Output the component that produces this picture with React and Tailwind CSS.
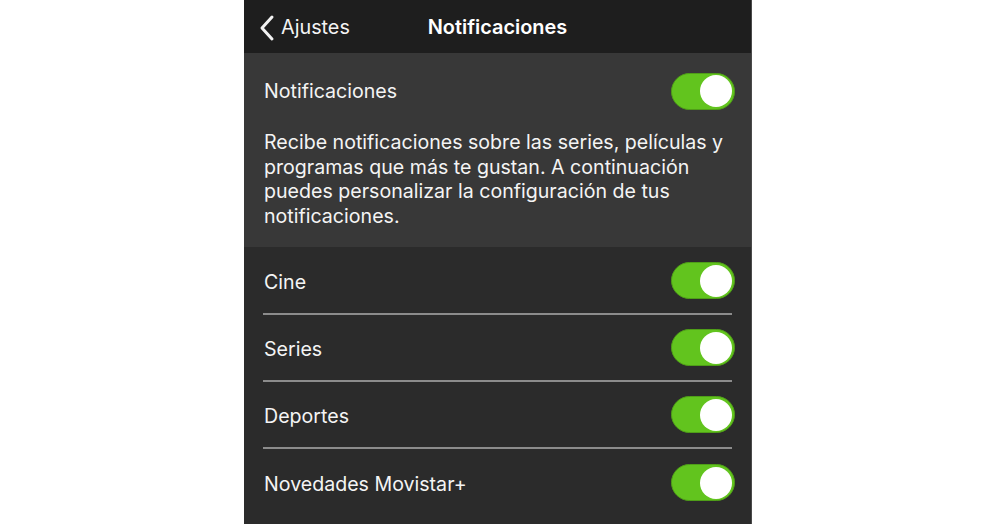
import React from "react";

function Toggle() {
  return (
    <div className="w-[64px] h-[37px] rounded-full bg-[#62c41e] border border-[#4f9e18] flex items-center justify-end pr-[2px] shrink-0">
      <div className="w-[32px] h-[32px] rounded-full bg-white" />
    </div>
  );
}

function Row({ label, last }) {
  return (
    <div className="h-[67px] flex flex-col">
      <div className="flex-1 flex items-center justify-between pl-[20px] pr-[16px]">
        <span className="pt-[4px] text-[19.6px] text-[#f4f4f4]">{label}</span>
        <Toggle />
      </div>
      {!last && <div className="ml-[19px] mr-[19px] h-[2px] bg-[#8c8c8c]" />}
    </div>
  );
}

export default function App() {
  return (
    <div className="w-[998px] h-[524px] bg-white flex justify-center overflow-hidden" style={{ fontFamily: "Inter, 'Noto Sans', sans-serif" }}>
      <div className="ml-[-2px] w-[508px] h-full flex flex-col bg-[#2b2b2b] border-r border-[#4a4a4a]">
        <div className="h-[53px] bg-[#1e1e1e] relative flex items-center shrink-0 pt-[3px]">
          <div className="flex items-center pl-[15px] gap-[6px]">
            <svg width="16" height="28" viewBox="0 0 16 28" fill="none">
              <path d="M13 3 L3 14 L13 25" stroke="#f2f2f2" strokeWidth="3" strokeLinecap="round" strokeLinejoin="round" />
            </svg>
            <span className="text-[19.8px] text-[#f4f4f4]">Ajustes</span>
          </div>
          <div className="absolute inset-0 pt-[3px] flex items-center justify-center pointer-events-none">
            <span className="text-[19.9px] font-semibold text-white">Notificaciones</span>
          </div>
        </div>
        <div className="bg-[#383838] h-[194px] shrink-0 flex flex-col">
          <div className="h-[76px] flex items-center justify-between pl-[20px] pr-[16px]">
            <span className="pt-[2px] text-[19.6px] text-[#f4f4f4]">Notificaciones</span>
            <Toggle />
          </div>
          <p className="pt-[1px] pl-[20px] pr-[16px] text-[19.6px] leading-[24.7px] text-[#f4f4f4]">
            Recibe notificaciones sobre las series, películas y programas que más te gustan. A continuación puedes personalizar la configuración de tus notificaciones.
          </p>
        </div>
        <div className="pt-[1px] flex flex-col">
          <Row label="Cine" />
          <Row label="Series" />
          <Row label="Deportes" />
          <Row label="Novedades Movistar+" last />
        </div>
      </div>
    </div>
  );
}
